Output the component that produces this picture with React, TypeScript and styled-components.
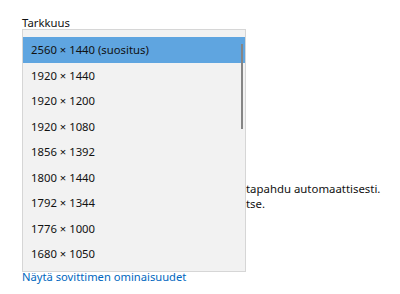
import React from "react";
import styled, { createGlobalStyle } from "styled-components";

const GlobalStyle = createGlobalStyle`
  html, body {
    margin: 0;
    padding: 0;
    background: #ffffff;
  }
  body {
    font-family: "Noto Sans", "Open Sans", sans-serif;
    color: #000000;
  }
`;

const Page = styled.div`
  position: relative;
  width: 400px;
  height: 294px;
  padding: 15px 0 0 22px;
  box-sizing: border-box;
  overflow: hidden;
`;

const Label = styled.div`
  font-size: 11.3px;
  line-height: 16px;
  color: #111111;
`;

const Info = styled.div`
  margin-top: 150px;
  font-size: 11.4px;
  line-height: 15px;
  color: #111111;
`;

const InfoLine = styled.div`
  display: flex;
  white-space: nowrap;
`;

const Hidden = styled.span`
  display: inline-block;
  width: 224px;
  overflow: hidden;
`;

const Link = styled.a`
  display: block;
  margin-top: 58px;
  font-size: 11.2px;
  line-height: 16px;
  color: #0067c0;
  text-decoration: none;
`;

const Dropdown = styled.div`
  position: absolute;
  left: 22px;
  top: 29px;
  width: 224px;
  height: 243px;
  box-sizing: border-box;
  border: 1px solid #d6d6d6;
  background: #f2f2f2;
  padding-top: 7px;
`;

const Option = styled.div<{ $selected?: boolean }>`
  height: 25.5px;
  display: flex;
  align-items: center;
  padding-left: 8px;
  font-size: 11.3px;
  color: #111111;
  background: ${({ $selected }) => ($selected ? "#5fa5e0" : "transparent")};
`;

const ScrollThumb = styled.div`
  position: absolute;
  right: 2px;
  top: 14px;
  width: 2px;
  height: 85px;
  background: #858585;
`;

const options = [
  "2560 × 1440 (suositus)",
  "1920 × 1440",
  "1920 × 1200",
  "1920 × 1080",
  "1856 × 1392",
  "1800 × 1440",
  "1792 × 1344",
  "1776 × 1000",
  "1680 × 1050",
];

export default function App() {
  return (
    <>
      <GlobalStyle />
      <Page>
        <Label>Tarkkuus</Label>
        <Info>
          <InfoLine>
            <Hidden>Vanhempien näyttöjen yhdistäminen ei aina </Hidden>
            tapahdu automaattisesti.
          </InfoLine>
          <InfoLine>
            <Hidden>Valitse Tunnista, jos haluat yhdistää ne i</Hidden>
            tse.
          </InfoLine>
        </Info>
        <Link href="#">Näytä sovittimen ominaisuudet</Link>
        <Dropdown>
          {options.map((o, i) => (
            <Option key={o} $selected={i === 0}>
              {o}
            </Option>
          ))}
          <ScrollThumb />
        </Dropdown>
      </Page>
    </>
  );
}
